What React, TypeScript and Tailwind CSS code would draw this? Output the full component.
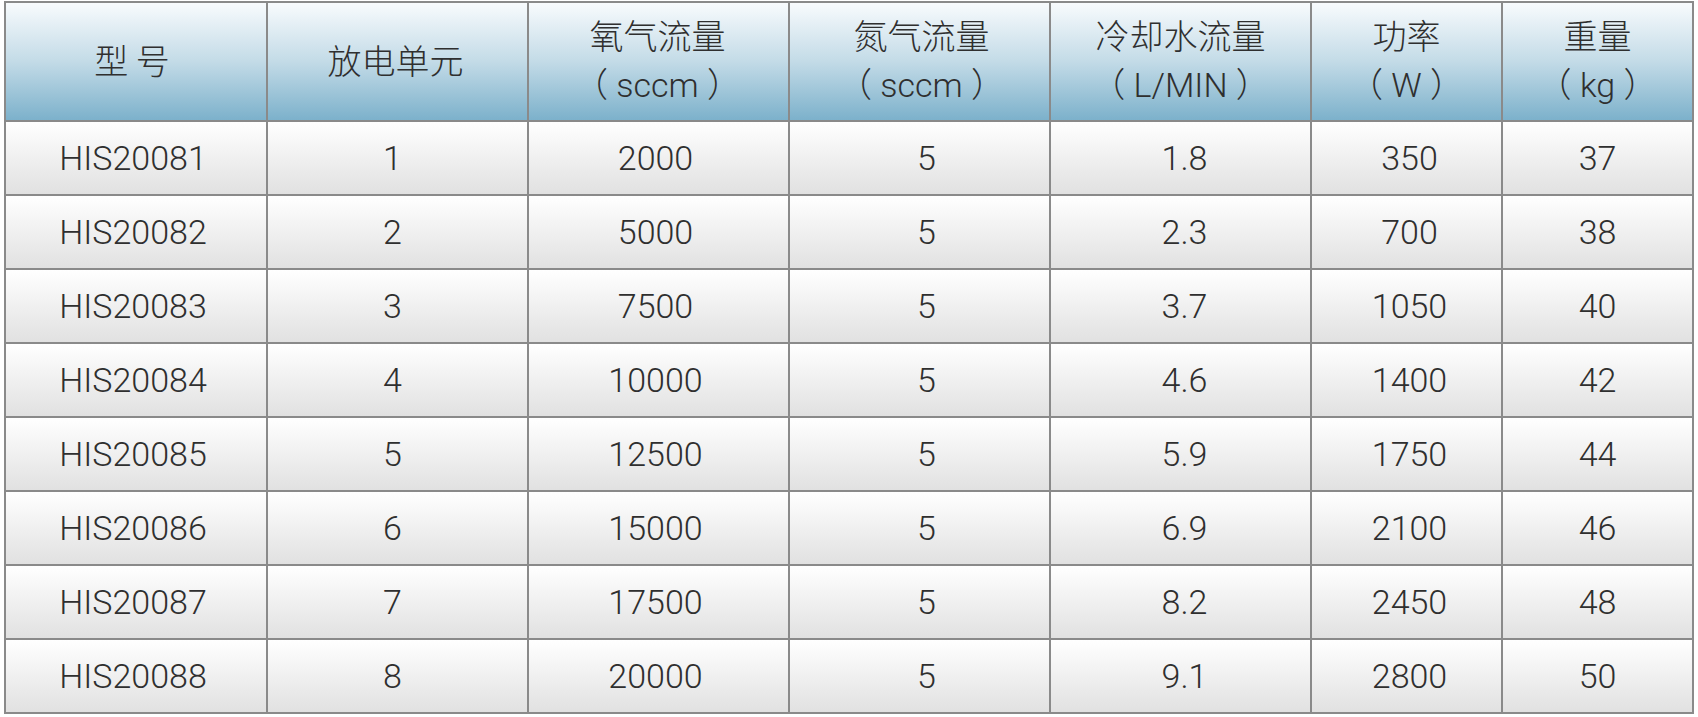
const headers: { top: string; unit?: string }[] = [
  { top: "型 号" },
  { top: "放电单元" },
  { top: "氧气流量", unit: "（ sccm ）" },
  { top: "氮气流量", unit: "（ sccm ）" },
  { top: "冷却水流量", unit: "（ L/MIN ）" },
  { top: "功率", unit: "（ W ）" },
  { top: "重量", unit: "（ kg ）" },
];

const rows = [
  ["HIS20081", "1", "2000", "5", "1.8", "350", "37"],
  ["HIS20082", "2", "5000", "5", "2.3", "700", "38"],
  ["HIS20083", "3", "7500", "5", "3.7", "1050", "40"],
  ["HIS20084", "4", "10000", "5", "4.6", "1400", "42"],
  ["HIS20085", "5", "12500", "5", "5.9", "1750", "44"],
  ["HIS20086", "6", "15000", "5", "6.9", "2100", "46"],
  ["HIS20087", "7", "17500", "5", "8.2", "2450", "48"],
  ["HIS20088", "8", "20000", "5", "9.1", "2800", "50"],
];

const widths = [262, 261, 261, 261, 261, 191, 191];

// small per-column nudges so the numbers sit where the original puts them
const nudge = ["pr-[6px]", "pr-[10px]", "pr-[6px]", "pl-[14px]", "pl-[8px]", "pl-[6px]", ""];
const headNudge = ["pr-[8px]", "pr-[4px]", "pr-[2px]", "pl-[4px]", "", "", ""];

export default function App() {
  return (
    <div className="min-h-screen bg-white pl-[4px] pt-[1px] text-[#2f2f2f]">
      <table className="w-[1690px] table-fixed border-collapse border-2 border-[#8a8a8a] font-['Roboto','Noto_Sans_CJK_SC',sans-serif] font-light">
        <colgroup>
          {widths.map((w, i) => (
            <col key={i} style={{ width: w }} />
          ))}
        </colgroup>
        <thead>
          <tr>
            {headers.map((h, i) => (
              <th
                key={h.top}
                className={`h-[119px] border-2 border-[#8a8a8a] bg-gradient-to-b from-[#f8fbfd] via-[#c3dbe7] to-[#7cb1cb] p-0 pb-[5px] text-center align-middle font-light ${headNudge[i]}`}
              >
                <div className="text-[34px] leading-[47px] font-['Noto_Sans_CJK_SC',sans-serif] font-light">
                  {h.top}
                </div>
                {h.unit && (
                  <div className="mt-[4px] -mb-[2px] text-[34px] leading-[47px]">{h.unit}</div>
                )}
              </th>
            ))}
          </tr>
        </thead>
        <tbody>
          {rows.map((r) => (
            <tr key={r[0]}>
              {r.map((c, i) => (
                <td
                  key={i}
                  className={`h-[74px] border-2 border-[#8a8a8a] bg-gradient-to-b from-white to-[#e1e1e1] p-0 text-center align-middle text-[34px] leading-none ${nudge[i]}`}
                >
                  {c}
                </td>
              ))}
            </tr>
          ))}
        </tbody>
      </table>
    </div>
  );
}
